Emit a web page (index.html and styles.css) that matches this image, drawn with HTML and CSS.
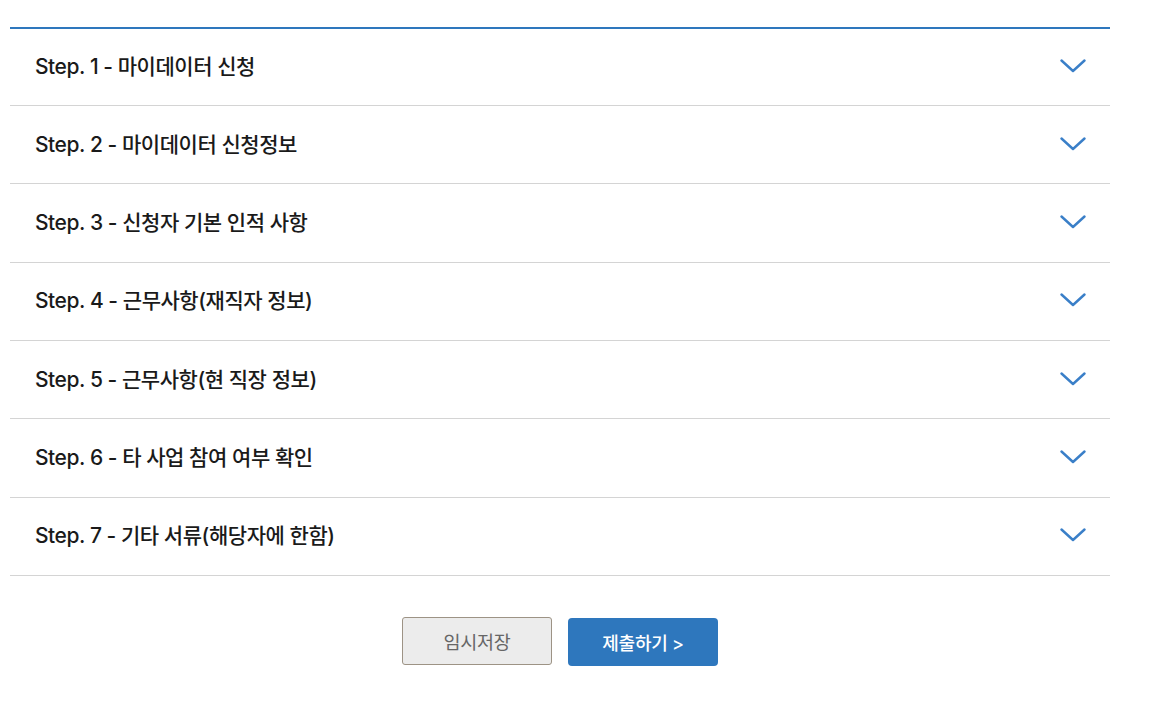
FILE: index.html
```html
<!DOCTYPE html>
<html lang="ko">
<head>
<meta charset="utf-8">
<link rel="stylesheet" href="styles.css">
</head>
<body>
<div class="wrap">
  <div class="accordion">
    <div class="item"><span class="title">Step. 1 - 마이데이터 신청</span><svg class="chev" viewBox="0 0 26 14" width="26" height="14"><path d="M1.5 1.5 L13 12 L24.5 1.5"/></svg></div>
    <div class="item"><span class="title">Step. 2 - 마이데이터 신청정보</span><svg class="chev" viewBox="0 0 26 14" width="26" height="14"><path d="M1.5 1.5 L13 12 L24.5 1.5"/></svg></div>
    <div class="item"><span class="title">Step. 3 - 신청자 기본 인적 사항</span><svg class="chev" viewBox="0 0 26 14" width="26" height="14"><path d="M1.5 1.5 L13 12 L24.5 1.5"/></svg></div>
    <div class="item"><span class="title">Step. 4 - 근무사항(재직자 정보)</span><svg class="chev" viewBox="0 0 26 14" width="26" height="14"><path d="M1.5 1.5 L13 12 L24.5 1.5"/></svg></div>
    <div class="item"><span class="title">Step. 5 - 근무사항(현 직장 정보)</span><svg class="chev" viewBox="0 0 26 14" width="26" height="14"><path d="M1.5 1.5 L13 12 L24.5 1.5"/></svg></div>
    <div class="item"><span class="title">Step. 6 - 타 사업 참여 여부 확인</span><svg class="chev" viewBox="0 0 26 14" width="26" height="14"><path d="M1.5 1.5 L13 12 L24.5 1.5"/></svg></div>
    <div class="item"><span class="title">Step. 7 - 기타 서류(해당자에 한함)</span><svg class="chev" viewBox="0 0 26 14" width="26" height="14"><path d="M1.5 1.5 L13 12 L24.5 1.5"/></svg></div>
  </div>
  <div class="actions">
    <button class="btn btn-save">임시저장</button>
    <button class="btn btn-submit">제출하기 &gt;</button>
  </div>
</div>
</body>
</html>
```
FILE: styles.css
```css
html, body {
  margin: 0;
  padding: 0;
  background: #fff;
}
body {
  font-family: Inter, "Noto Sans CJK KR", sans-serif;
}
.wrap {
  width: 1100px;
  margin-left: 10px;
  padding-top: 27px;
}
.accordion {
  border-top: 2px solid #2e77bd;
}
.item {
  height: 77.33px;
  border-bottom: 1px solid #d4d4d4;
  display: flex;
  align-items: center;
  justify-content: space-between;
  padding: 0 25px;
}
.item:first-child {
  height: 76px;
}
.title {
  font-size: 21px;
  font-weight: 500;
  color: #1a1a1a;
  letter-spacing: -0.45px;
  margin-top: -4px;
}
.chev {
  fill: none;
  stroke: #3a7fc8;
  stroke-width: 2.4;
  stroke-linecap: round;
  stroke-linejoin: round;
  margin-right: -1px;
  margin-top: -2px;
}
.actions {
  display: flex;
  justify-content: center;
  gap: 16px;
  margin-top: 41px;
}
.btn {
  width: 150px;
  height: 48px;
  font-family: Inter, "Noto Sans CJK KR", sans-serif;
  font-size: 18.5px;
  letter-spacing: -0.3px;
  cursor: pointer;
  box-sizing: border-box;
}
.btn-save {
  background: #ececec;
  border: 1px solid #9d9385;
  border-radius: 3px;
  color: #666;
}
.btn-submit {
  background: #2e77bd;
  border: none;
  border-radius: 4px;
  color: #fff;
  font-weight: 500;
  font-size: 18px;
  margin-top: 1px;
}
```
